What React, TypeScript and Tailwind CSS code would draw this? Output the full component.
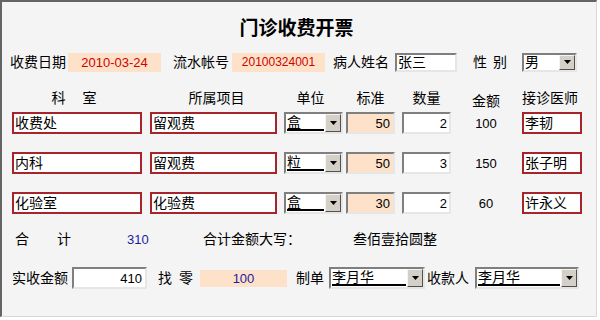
import React from "react";

const FONT = "font-['Liberation_Sans','Noto_Sans_CJK_SC',sans-serif]";

function Arrow() {
  return (
    <svg width="7" height="4" viewBox="0 0 7 4">
      <path d="M0 0H7L3.5 4Z" fill="#000" />
    </svg>
  );
}

function Select({ className, text }: { className: string; text: string }) {
  return (
    <div
      className={`flex border-2 border-t-[#7f7f7f] border-l-[#7f7f7f] border-r-[#e6e6e6] border-b-[#e6e6e6] bg-white ${className}`}
    >
      <div className="flex-1 flex flex-col min-w-0 pl-[1px]">
        <div className="flex-1 flex items-center text-[14px] leading-none text-black">{text}</div>
        <div className="h-[2px] bg-black mb-[1px] mr-[1px]" />
      </div>
      <div className="w-[16px] bg-[#d4d0c8] border border-t-[#f4f4f4] border-l-[#f4f4f4] border-r-[#505050] border-b-[#505050] flex items-center justify-center">
        <Arrow />
      </div>
    </div>
  );
}

function Inset({ className, children }: { className: string; children?: React.ReactNode }) {
  return (
    <div
      className={`flex items-center border-2 border-t-[#7f7f7f] border-l-[#7f7f7f] border-r-[#e6e6e6] border-b-[#e6e6e6] leading-none ${className}`}
    >
      {children}
    </div>
  );
}

function RedBox({ className, text }: { className: string; text: string }) {
  return (
    <div
      className={`h-[22px] flex items-center border-2 border-[#a8242b] bg-white pl-[1px] text-[14px] leading-none text-black ${className}`}
    >
      {text}
    </div>
  );
}

type Row = { dept: string; item: string; unit: string; price: string; qty: string; amount: string; doctor: string };

const rows: Row[] = [
  { dept: "收费处", item: "留观费", unit: "盒", price: "50", qty: "2", amount: "100", doctor: "李韧" },
  { dept: "内科", item: "留观费", unit: "粒", price: "50", qty: "3", amount: "150", doctor: "张子明" },
  { dept: "化验室", item: "化验费", unit: "盒", price: "30", qty: "2", amount: "60", doctor: "许永义" },
];

function DataRow({ r, first }: { r: Row; first: boolean }) {
  return (
    <div className={`flex items-center h-[22px] pl-[10px] ${first ? "mt-[4px]" : "mt-[18px]"}`}>
      <RedBox className="w-[130px]" text={r.dept} />
      <RedBox className="w-[127px] ml-[8px]" text={r.item} />
      <Select className="w-[59px] h-[22px] ml-[7px]" text={r.unit} />
      <Inset className="w-[49px] h-[22px] ml-[3px] bg-[#fde2c9] justify-end pr-[3px] text-[13px] text-black">
        {r.price}
      </Inset>
      <Inset className="w-[49px] h-[22px] ml-[7px] bg-white justify-end pr-[2px] text-[13px] text-black">
        {r.qty}
      </Inset>
      <div className="w-[56px] ml-[7px] text-center text-[13px] text-black leading-none">{r.amount}</div>
      <RedBox className="w-[60px] ml-[8px]" text={r.doctor} />
    </div>
  );
}

export default function App() {
  return (
    <div className={`w-[600px] h-[320px] bg-white ${FONT}`}>
      <div className="w-[597px] h-[317px] bg-[#f4f4f4] border-t-2 border-l-2 border-t-[#646464] border-l-[#646464] border-r border-b border-r-[#d8d8d8] border-b-[#d8d8d8] text-black">
        {/* Title */}
        <div className="mt-[15px] h-[24px] leading-[24px] text-center text-[19px] font-bold pr-[5px]">
          门诊收费开票
        </div>

        {/* Row 1 */}
        <div className="flex items-center h-[20px] mt-[11px] pl-[8px] text-[14px] leading-none">
          <span className="w-[56px]">收费日期</span>
          <div className="ml-[2px] w-[93px] h-[19px] bg-[#fde2c9] text-[#d00000] text-[13px] flex items-center justify-center">
            2010-03-24
          </div>
          <span className="ml-[12px] w-[56px]">流水帐号</span>
          <div className="ml-[3px] w-[93px] h-[19px] bg-[#fde2c9] text-[#d00000] text-[12px] flex items-center justify-center">
            20100324001
          </div>
          <span className="ml-[8px] w-[56px]">病人姓名</span>
          <Inset className="ml-[6px] w-[62px] h-[19px] bg-white pl-[1px] text-[14px]">张三</Inset>
          <span className="ml-[16px] w-[34px] flex justify-between">
            <span>性</span>
            <span>别</span>
          </span>
          <Select className="ml-[15px] w-[55px] h-[19px]" text="男" />
        </div>

        {/* Header */}
        <div className="flex items-center h-[20px] mt-[16px] pl-[10px] text-[14px] leading-none">
          <div className="w-[130px] flex justify-center pr-[6px]">
            <span>科</span>
            <span className="ml-[17px]">室</span>
          </div>
          <div className="w-[127px] ml-[8px] text-center pl-[6px]">所属项目</div>
          <div className="w-[59px] ml-[7px] text-center pr-[6px]">单位</div>
          <div className="w-[49px] ml-[3px] text-center">标准</div>
          <div className="w-[49px] ml-[7px] text-center">数量</div>
          <div className="w-[56px] ml-[7px] text-center pt-[5px]">金额</div>
          <div className="w-[60px] ml-[8px] text-center pr-[4px]">接诊医师</div>
        </div>

        {rows.map((r, i) => (
          <DataRow key={i} r={r} first={i === 0} />
        ))}

        {/* Sum row */}
        <div className="flex items-center h-[20px] mt-[15px] pl-[13px] text-[14px] leading-none">
          <span className="w-[42px]">合</span>
          <span className="w-[70px]">计</span>
          <span className="w-[76px] text-[13px] text-[#1c1ca0]">310</span>
          <span className="w-[150px]">合计金额大写：</span>
          <span>叁佰壹拾圆整</span>
        </div>

        {/* Bottom row */}
        <div className="flex items-center h-[22px] mt-[18px] pl-[10px] text-[14px] leading-none">
          <span className="w-[56px]">实收金额</span>
          <Inset className="ml-[4px] w-[75px] h-[22px] bg-white justify-end pr-[3px] text-[13px]">410</Inset>
          <span className="ml-[11px] w-[35px] flex justify-between">
            <span>找</span>
            <span>零</span>
          </span>
          <div className="ml-[7px] w-[87px] h-[17px] bg-[#fde2c9] text-[#1c1ca0] text-[13px] flex items-center justify-center">
            100
          </div>
          <span className="ml-[9px] w-[28px]">制单</span>
          <Select className="ml-[5px] w-[96px] h-[22px]" text="李月华" />
          <span className="ml-[2px] w-[42px]">收款人</span>
          <Select className="ml-[6px] w-[104px] h-[22px]" text="李月华" />
        </div>
      </div>
    </div>
  );
}
